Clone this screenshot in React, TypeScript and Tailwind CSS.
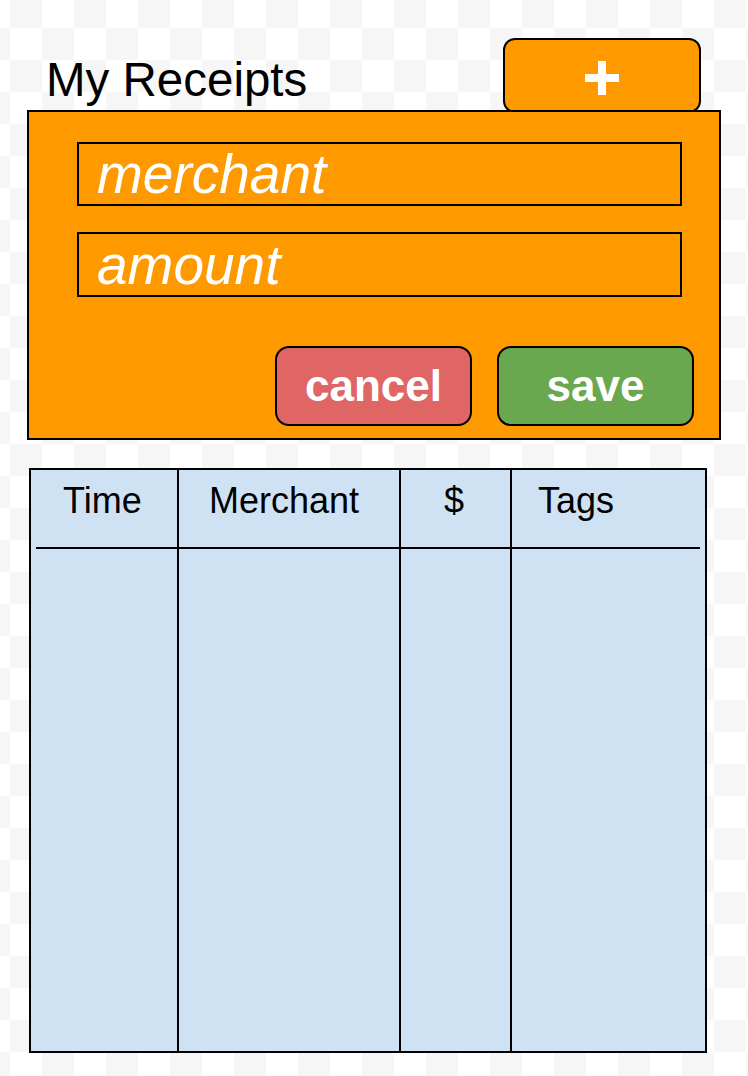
const FONT = "font-['Liberation_Sans',Arial,sans-serif]"

const columns = [
  { label: 'Time', width: 'pl-[32px]' },
  { label: 'Merchant', width: 'pl-[30px]' },
  { label: '$', width: 'pl-[43px]' },
  { label: 'Tags', width: 'pl-[26px]' },
]

function PlusIcon() {
  return (
    <svg width="34" height="34" viewBox="0 0 34 34" aria-hidden="true">
      <rect x="0" y="13" width="34" height="8" fill="#fff" />
      <rect x="13" y="0" width="8" height="34" fill="#fff" />
    </svg>
  )
}

function ReceiptForm() {
  return (
    <form
      className="relative flex h-[330px] w-[694px] flex-col border-2 border-black bg-[#ff9900] pl-[48px] pr-[37px] pt-[30px]"
      onSubmit={(event) => event.preventDefault()}
    >
      <input
        type="text"
        placeholder="merchant"
        className={`${FONT} h-[64px] w-[605px] border-2 border-black bg-transparent px-[18px] text-[55px] italic leading-none text-white outline-none placeholder:text-white`}
      />
      <input
        type="text"
        placeholder="amount"
        className={`${FONT} mt-[26px] h-[65px] w-[605px] border-2 border-black bg-transparent px-[18px] text-[55px] italic leading-none text-white outline-none placeholder:text-white`}
      />
      <div className="-mr-[12px] mt-[49px] flex justify-end gap-[25px]">
        <button
          type="button"
          className={`${FONT} flex h-[80px] w-[197px] items-center justify-center rounded-[14px] border-2 border-black bg-[#e06666] text-[44px] font-bold leading-none text-white`}
        >
          cancel
        </button>
        <button
          type="submit"
          className={`${FONT} flex h-[80px] w-[197px] items-center justify-center rounded-[14px] border-2 border-black bg-[#6aa84f] text-[44px] font-bold leading-none text-white`}
        >
          save
        </button>
      </div>
    </form>
  )
}

function ReceiptsTable() {
  return (
    <div className="ml-[2px] mt-[28px] grid h-[585px] w-[678px] grid-cols-[146px_222px_111px_195px] border-2 border-black bg-[#cfe2f3]">
      {columns.map((col, i) => (
        <div key={col.label} className={i === 0 ? 'flex flex-col' : 'flex flex-col border-l-2 border-black'}>
          <div
            className={[
              FONT,
              'h-[79px] border-b-2 border-black pt-[13px] text-[36px] leading-none text-black',
              col.width,
              i === 0 ? 'ml-[5px]' : '',
              i === columns.length - 1 ? 'mr-[5px]' : '',
            ].join(' ')}
          >
            {i === 0 ? <span className="-ml-[5px]">{col.label}</span> : col.label}
          </div>
        </div>
      ))}
    </div>
  )
}

export default function App() {
  return (
    <div className="min-h-screen w-full bg-[conic-gradient(#f6f6f6_0_25%,#ffffff_0_50%,#f6f6f6_0_75%,#ffffff_0)] bg-[length:64px_64px] bg-[position:-22px_-4px] pl-[27px] pt-[38px]">
      <div className="flex w-[694px] items-end justify-between">
        <h1 className={`${FONT} ml-[19px] pb-[7px] text-[47.5px] font-normal leading-none text-black`}>
          My Receipts
        </h1>
        <button
          type="button"
          aria-label="Add receipt"
          className="-mb-[3px] mr-[20px] flex h-[75px] w-[198px] justify-center rounded-[12px] border-2 border-black bg-[#ff9900] pt-[21px]"
        >
          <PlusIcon />
        </button>
      </div>
      <ReceiptForm />
      <ReceiptsTable />
    </div>
  )
}
